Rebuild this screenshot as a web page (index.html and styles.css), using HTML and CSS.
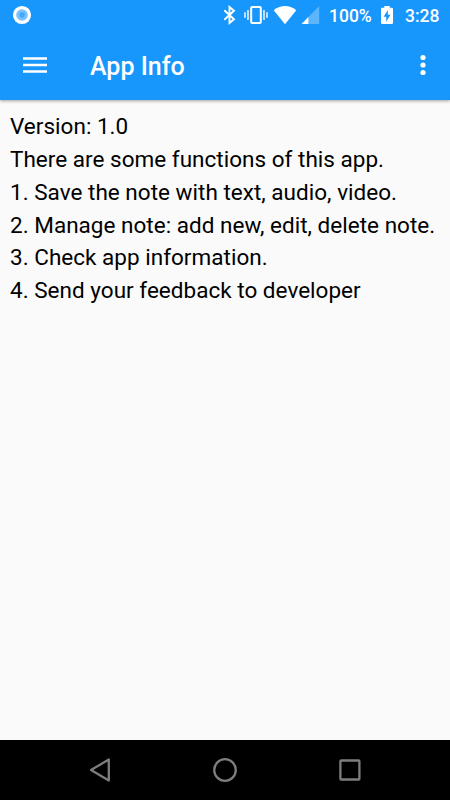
FILE: index.html
```html
<!DOCTYPE html>
<html lang="en">
<head>
<meta charset="utf-8">
<title>App Info</title>
<link rel="stylesheet" href="styles.css">
</head>
<body>
<header class="top">
  <div class="status">
    <svg class="record" width="20" height="20" viewBox="0 0 20 20"><circle cx="10" cy="10" r="9.1" fill="#fff"/><circle cx="10" cy="10" r="5.8" fill="#79c2fd"/><circle cx="10" cy="10" r="2.7" fill="#43a9fb"/></svg>
    <svg class="bluetooth" width="13" height="20" viewBox="0 0 13 20"><path d="M1.3 5.2 11 14.2 6.5 18V2L11 5.8 1.3 14.8" fill="none" stroke="#fff" stroke-width="1.9"/></svg>
    <svg class="vibrate" width="24" height="20" viewBox="0 0 24 20"><path d="M1 7.2v5.6M4 5v10M20 5v10M23 7.2v5.6" stroke="#e5f3ff" stroke-width="1.6"/><rect x="7.2" y="2.1" width="9.6" height="15.8" rx="1" fill="none" stroke="#fff" stroke-width="2"/></svg>
    <svg class="wifi" width="24" height="20" viewBox="0 0 24 20"><path d="M.7 5.2Q12-3.2 23.3 5.2L12 19.2Z" fill="#fff"/></svg>
    <svg class="signal" width="19" height="20" viewBox="0 0 19 20"><path d="M18.2 1v18H.6Z" fill="#5db6fc"/><path d="M7.4 12v7H.6Z" fill="#fff"/></svg>
    <span class="percent">100%</span>
    <svg class="battery" width="12" height="20" viewBox="0 0 12 20"><path fill="#fff" fill-rule="evenodd" d="M3.3 1h5.4v1.8h2.1Q12 2.8 12 4v13.8Q12 19 10.8 19H1.2Q0 19 0 17.8V4Q0 2.8 1.2 2.8h2.1ZM6.8 5 2.6 11.8h2.6V16.8L9.5 9.8H6.8Z"/></svg>
    <span class="clock">3:28</span>
  </div>
  <div class="toolbar">
    <svg class="menu" width="24" height="18" viewBox="0 0 24 18"><path d="M0 2.4h24M0 8.9h24M0 15.4h24" stroke="#fff" stroke-width="2.5"/></svg>
    <h1>App Info</h1>
    <svg class="more" width="6" height="22" viewBox="0 0 6 22"><g fill="#fff"><circle cx="3" cy="3.5" r="2.6"/><circle cx="3" cy="11" r="2.6"/><circle cx="3" cy="18.5" r="2.6"/></g></svg>
  </div>
</header>
<main>
  <p>Version: 1.0</p>
  <p>There are some functions of this app.</p>
  <p>1. Save the note with text, audio, video.</p>
  <p>2. Manage note: add new, edit, delete note.</p>
  <p>3. Check app information.</p>
  <p>4. Send your feedback to developer</p>
</main>
<nav class="navbar">
  <svg width="26" height="26" viewBox="0 0 26 26"><path d="M21.8 2.5v21L4 13Z"/></svg>
  <svg width="26" height="26" viewBox="0 0 26 26"><circle cx="13" cy="13" r="10.8"/></svg>
  <svg width="26" height="26" viewBox="0 0 26 26"><rect x="3.4" y="3.5" width="19" height="19" rx=".8"/></svg>
</nav>
</body>
</html>
```
FILE: styles.css
```css
* { box-sizing: border-box; }
body {
  margin: 0;
  height: 800px;
  display: flex;
  flex-direction: column;
  overflow: hidden;
  background: #fafafa;
  color: #000;
  font-family: Roboto, "Liberation Sans", sans-serif;
}
svg { display: block; flex: none; }
.top {
  height: 100px;
  flex: none;
  background: #1797fc;
  color: #fff;
  box-shadow: 0 1px 3px rgba(60, 40, 20, .45);
}
.status {
  height: 30px;
  display: flex;
  align-items: center;
  font-size: 17.5px;
  font-weight: 500;
  line-height: 30px;
  white-space: nowrap;
}
.record { margin-left: 12px; }
.bluetooth { margin-left: 191px; }
.vibrate { margin-left: 8px; }
.wifi { margin-left: 5px; }
.signal { margin-left: 4px; }
.percent { width: 51px; margin-left: 9px; padding-top: 2px; }
.battery { margin-left: 1px; }
.clock { margin-left: 12px; padding-top: 2px; }
.toolbar {
  height: 70px;
  display: flex;
  align-items: center;
  padding: 0 24.5px 0 23px;
}
h1 {
  flex: 1;
  margin: 4px 0 0 43px;
  font-size: 25px;
  font-weight: 500;
  line-height: 32px;
}
main {
  flex: 1;
  padding: 10.3px 0 0 10px;
  font-size: 22.5px;
  line-height: 32.8px;
  letter-spacing: .02px;
  white-space: nowrap;
}
p { margin: 0; }
.navbar {
  height: 60px;
  flex: none;
  display: flex;
  align-items: center;
  justify-content: space-between;
  padding: 0 87px;
  background: #000;
}
.navbar svg {
  fill: none;
  stroke: #7d7d7d;
  stroke-width: 2.3;
  stroke-linejoin: round;
}
```
